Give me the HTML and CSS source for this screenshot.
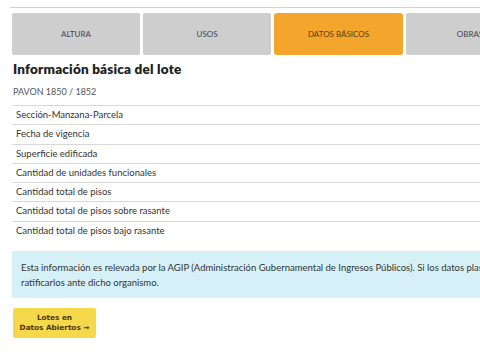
FILE: index.html
```html
<!DOCTYPE html>
<html lang="es">
<head>
    <meta charset="UTF-8">
    <title>Datos básicos</title>
    <link rel="stylesheet" href="styles.css">
</head>
<body>
    <div class="page">
        <div class="top-rule"></div>
        <div class="tabs">
            <div class="tab">ALTURA</div>
            <div class="tab">USOS</div>
            <div class="tab active">DATOS BÁSICOS</div>
            <div class="tab">OBRAS</div>
        </div>
        <h2 class="title">Información básica del lote</h2>
        <div class="address">PAVON 1850 / 1852</div>
        <div class="rows">
            <div class="row">Sección-Manzana-Parcela</div>
            <div class="row">Fecha de vigencia</div>
            <div class="row">Superficie edificada</div>
            <div class="row">Cantidad de unidades funcionales</div>
            <div class="row">Cantidad total de pisos</div>
            <div class="row">Cantidad total de pisos sobre rasante</div>
            <div class="row">Cantidad total de pisos bajo rasante</div>
        </div>
        <div class="notice">
            Esta información es relevada por la AGIP (Administración Gubernamental de Ingresos Públicos). Si los datos plasmados no son correctos, deberá ratificarlos ante dicho organismo.
        </div>
        <a class="open-data" href="#">Lotes en<br>Datos Abiertos &#8594;</a>
    </div>
</body>
</html>
```

FILE: styles.css
```css
body {
    margin: 0;
    padding: 0;
    background: #fff;
    font-family: 'Lato', 'Liberation Sans', sans-serif;
    color: #333;
    overflow: hidden;
}
.page {
    padding-left: 12px;
    width: 636px;
}
.top-rule {
    margin: 7px 0 0 -2px;
    border-top: 1px solid #d2d2d2;
}
.tabs {
    display: flex;
    gap: 3px;
    margin-top: 5px;
}
.tab {
    flex: 0 0 128px;
    height: 42px;
    display: flex;
    align-items: center;
    justify-content: center;
    background-color: #cecece;
    border-radius: 2px;
    font-size: 8px;
    color: #444;
}
.tab.active {
    flex-basis: 129px;
    background-color: #f4a52c;
    color: #5b3a0e;
    border-radius: 3px;
}
.title {
    margin: 6px 0 0 1px;
    font-size: 13.5px;
    font-weight: 800;
    color: #222;
    letter-spacing: 0.2px;
}
.address {
    margin: 9px 0 0 1px;
    font-size: 9px;
    color: #555;
}
.rows {
    margin-top: 8px;
}
.row {
    height: 18.3px;
    line-height: 18px;
    padding-left: 4px;
    font-size: 9.5px;
    color: #333;
    border-top: 1px solid #d8d8d8;
}
.notice {
    margin-top: 11px;
    padding: 9px 9px 8px;
    background-color: #d5f1f7;
    font-size: 9.5px;
    line-height: 15px;
    color: #333;
}
.open-data {
    display: block;
    width: 83px;
    height: 30px;
    margin: 10px 0 0 1px;
    padding-top: 5px;
    box-sizing: border-box;
    background-color: #f6d84b;
    border-radius: 2px;
    text-align: center;
    text-decoration: none;
    font-family: 'DejaVu Sans', sans-serif;
    font-size: 7.3px;
    line-height: 10px;
    font-weight: bold;
    color: #4a3a05;
}
```
